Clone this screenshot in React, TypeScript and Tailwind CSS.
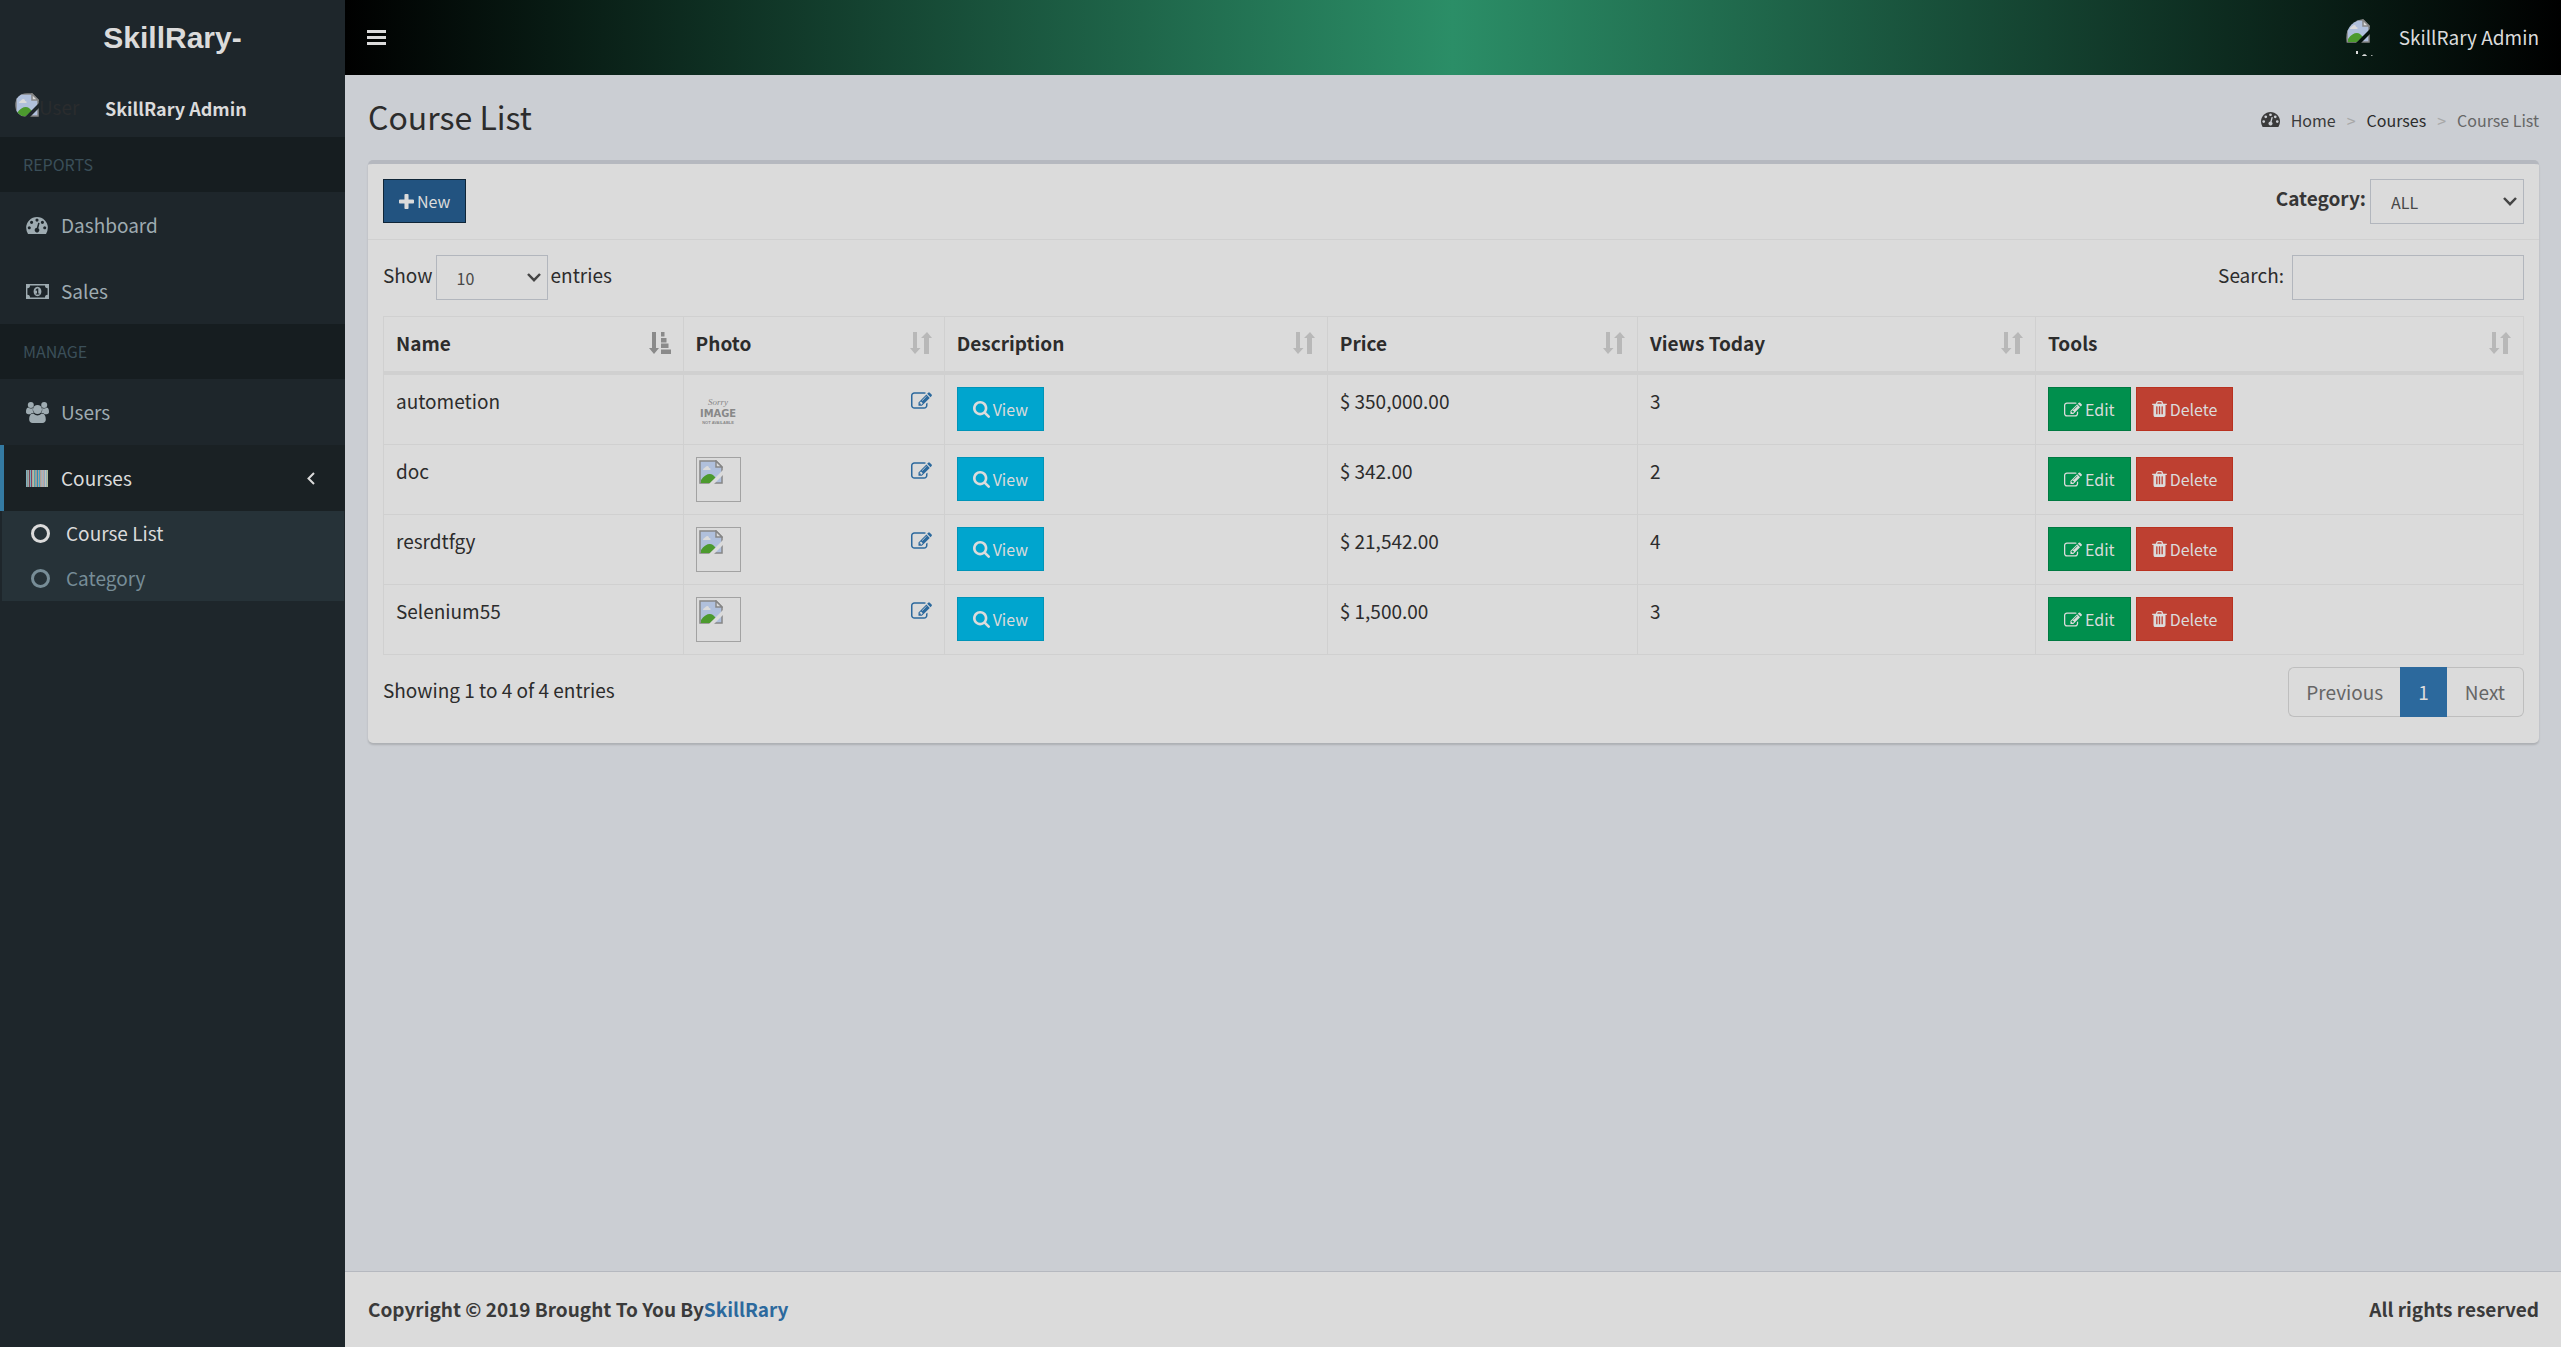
import type { ReactNode } from "react";

type IconProps = { className?: string };

function Glyph({ d, className, box = "0 0 1792 1792" }: IconProps & { d: string; box?: string }) {
  return (
    <svg viewBox={box} className={className} fill="currentColor" aria-hidden="true">
      <path d={d} />
    </svg>
  );
}

const GAUGE =
  "M384 1152q0-53-37.5-90.5t-90.5-37.5-90.5 37.5-37.5 90.5 37.5 90.5 90.5 37.5 90.5-37.5 37.5-90.5zm192-448q0-53-37.5-90.5t-90.5-37.5-90.5 37.5-37.5 90.5 37.5 90.5 90.5 37.5 90.5-37.5 37.5-90.5zm428 481l101-382q6-26-7.5-48.5t-38.5-29.5-48 6.5-30 39.5l-101 382q-60 5-107 43.5t-63 98.5q-20 77 20 146t117 89 146-20 89-117q16-60-6-117t-72-91zm660-33q0-53-37.5-90.5t-90.5-37.5-90.5 37.5-37.5 90.5 37.5 90.5 90.5 37.5 90.5-37.5 37.5-90.5zm-640-640q0-53-37.5-90.5t-90.5-37.5-90.5 37.5-37.5 90.5 37.5 90.5 90.5 37.5 90.5-37.5 37.5-90.5zm448 192q0-53-37.5-90.5t-90.5-37.5-90.5 37.5-37.5 90.5 37.5 90.5 90.5 37.5 90.5-37.5 37.5-90.5zm320 448q0 261-141 483-19 29-54 29h-1402q-35 0-54-29-141-221-141-483 0-182 71-348t191-286 286-191 348-71 348 71 286 191 191 286 71 348z";
const PENCIL_SQUARE =
  "M888 1184l116-116-152-152-116 116v56h96v96h56zm440-720q-16-16-33 1l-350 350q-17 17-1 33t33-1l350-350q17-17 1-33zm80 594v190q0 119-84.5 203.5t-203.5 84.5h-832q-119 0-203.5-84.5t-84.5-203.5v-832q0-119 84.5-203.5t203.5-84.5h832q63 0 117 25 15 7 18 23 3 17-9 29l-49 49q-14 14-32 8-23-6-45-6h-832q-66 0-113 47t-47 113v832q0 66 47 113t113 47h832q66 0 113-47t47-113v-126q0-13 9-22l64-64q15-15 35-7t20 29zm-96-738l288 288-672 672h-288v-288zm444 132l-92 92-288-288 92-92q28-28 68-28t68 28l152 152q28 28 28 68t-28 68z";
const MAGNIFIER =
  "M1216 832q0-185-131.5-316.5t-316.5-131.5-316.5 131.5-131.5 316.5 131.5 316.5 316.5 131.5 316.5-131.5 131.5-316.5zm512 832q0 52-38 90t-90 38q-54 0-90-38l-343-342q-179 124-399 124-143 0-273.5-55.5t-225-150-150-225-55.5-273.5 55.5-273.5 150-225 225-150 273.5-55.5 273.5 55.5 225 150 150 225 55.5 273.5q0 220-124 399l343 343q37 37 37 90z";
const TRASH =
  "M704 1376v-704q0-14-9-23t-23-9h-64q-14 0-23 9t-9 23v704q0 14 9 23t23 9h64q14 0 23-9t9-23zm256 0v-704q0-14-9-23t-23-9h-64q-14 0-23 9t-9 23v704q0 14 9 23t23 9h64q14 0 23-9t9-23zm256 0v-704q0-14-9-23t-23-9h-64q-14 0-23 9t-9 23v704q0 14 9 23t23 9h64q14 0 23-9t9-23zm-544-992h448l-48-117q-7-9-17-11h-317q-10 2-17 11zm928 32v64q0 14-9 23t-23 9h-96v948q0 83-47 143.5t-113 60.5h-832q-66 0-113-58.5t-47-141.5v-952h-96q-14 0-23-9t-9-23v-64q0-14 9-23t23-9h309l70-167q15-37 54-63t79-26h320q40 0 79 26t54 63l70 167h309q14 0 23 9t9 23z";
const PLUS =
  "M1600 736v192q0 40-28 68t-68 28h-416v416q0 40-28 68t-68 28h-192q-40 0-68-28t-28-68v-416h-416q-40 0-68-28t-28-68v-192q0-40 28-68t68-28h416v-416q0-40 28-68t68-28h192q40 0 68 28t28 68v416h416q40 0 68 28t28 68z";

function GaugeIcon({ className }: IconProps) {
  return <Glyph d={GAUGE} box="0 256 1792 1408" className={className} />;
}

function MoneyIcon() {
  return (
    <svg viewBox="0 0 23 15" className="h-[15px] w-[23px]" fill="currentColor" aria-hidden="true">
      <path
        fillRule="evenodd"
        d="M0 0H23V15H0ZM4 1.5A2.6 2.6 0 0 1 1.4 4.2V10.8A2.6 2.6 0 0 1 4 13.5H19A2.6 2.6 0 0 1 21.6 10.8V4.2A2.6 2.6 0 0 1 19 1.5Z"
      />
      <path
        fillRule="evenodd"
        d="M11.5 2.8C14 2.8 15.4 5 15.4 7.5S14 12.2 11.5 12.2 7.6 10 7.6 7.5 9 2.8 11.5 2.8ZM11 4.6L9.4 6.1 10.1 6.9 11 6.2V9.4H9.8V10.5H13.4V9.4H12.3V4.6Z"
      />
    </svg>
  );
}

function UsersIcon() {
  return (
    <svg viewBox="0 0 23 21" className="h-[21px] w-[23px]" fill="currentColor" aria-hidden="true">
      <circle cx="4.8" cy="3" r="3" />
      <circle cx="18.2" cy="3" r="3" />
      <path d="M2.2 5.6C4 6.9 5.7 6.6 7 5.9 6.5 8 6.8 9.5 7.9 11 6 11 5 11.6 4.4 12.2H2.4C.9 12.2 0 11.4 0 10 0 8 .5 5.6 2.2 5.6Z" />
      <path d="M20.8 5.6C19 6.9 17.3 6.6 16 5.9 16.5 8 16.2 9.5 15.1 11 17 11 18 11.6 18.6 12.2H20.6C22.1 12.2 23 11.4 23 10 23 8 22.5 5.6 20.8 5.6Z" />
      <circle cx="11.5" cy="7.5" r="4.5" />
      <path d="M7.3 11.5C10 14.1 13 14.1 15.7 11.5 18.8 11.5 19.8 14.5 19.8 17.5 19.8 19.8 18.4 21 16.5 21H6.5C4.6 21 3.2 19.8 3.2 17.5 3.2 14.5 4.2 11.5 7.3 11.5Z" />
    </svg>
  );
}

const STRIPES = [
  "#7fb0c0", "#8d9a92", "#9aa9ae", "#7a4552", "#6fb3c0", "#8a3f62", "#9db0a4", "#b6b9a0",
  "#4f9fb5", "#a59a8a", "#8fa0a8", "#2f8cb0", "#b0a390", "#4aa0c4", "#a8a496", "#b9a9ae",
  "#9fb8bd", "#c0a7a0", "#8fa8c0", "#c4c4bc", "#8fb4b8", "#b8bc98",
];

function BarcodeIcon() {
  return (
    <svg viewBox="0 0 22 17" className="h-[17px] w-[22px]" shapeRendering="crispEdges" aria-hidden="true">
      {STRIPES.map((fill, i) => (
        <rect key={i} x={i} y="0" width="1" height="17" fill={fill} />
      ))}
    </svg>
  );
}

function RingIcon() {
  return (
    <svg viewBox="0 0 19 19" className="h-[19px] w-[19px]" fill="none" stroke="currentColor" strokeWidth="3" aria-hidden="true">
      <circle cx="9.5" cy="9.5" r="8" />
    </svg>
  );
}

function SortIcon({ active = false }: { active?: boolean }) {
  return active ? (
    <svg viewBox="0 0 22 22" className="h-[22px] w-[22px] text-[#8a8a8a]" fill="currentColor" aria-hidden="true">
      <path d="M3 0H7V16H10L5 22 0 16H3Z" />
      <path d="M12 0H15.5V4.5H12ZM12 6H17.5V10.500H12ZM12 11.500H19.500V16H12ZM12 17.500H22V22H12Z" />
    </svg>
  ) : (
    <svg viewBox="0 0 22 22" className="h-[22px] w-[22px] text-[#b8b8b8]" fill="currentColor" aria-hidden="true">
      <path d="M3 0H7V16H10.5L5 22 0 16H3Z" />
      <path d="M17 0L22 6H19V22H14V6H11Z" />
    </svg>
  );
}

function BrokenPicture({ className }: IconProps) {
  return (
    <svg viewBox="0 0 24 24" className={className} aria-hidden="true">
      <path d="M1 1H17L23 7V23H1Z" fill="#b0c0dc" stroke="#868686" strokeWidth="1.5" />
      <path d="M4 10C4 8 6 8 6.5 7 8 5 10 6 10 8 12 8 12 10 11 10Z" fill="#dbdbdb" />
      <path d="M2 23V20C6 14 11 13 14 15L17 18 11 23Z" fill="#4c9a2e" />
      <path d="M17 1V7H23Z" fill="#dbdbdb" stroke="#868686" strokeWidth="1.5" />
      <path d="M24 10V15L15 24H10Z" className="fill-(--gap)" />
    </svg>
  );
}

function Chevron() {
  return (
    <svg
      viewBox="0 0 14 9"
      className="pointer-events-none absolute top-[18px] right-[7px] h-[9px] w-[14px]"
      fill="none"
      stroke="#454545"
      strokeWidth="2.5"
      aria-hidden="true"
    >
      <path d="M1 1L7 7.2 13 1" />
    </svg>
  );
}

function MenuHeading({ children }: { children: ReactNode }) {
  return <h2 className="h-[55px] bg-[#161d20] px-[23px] pt-[15px] text-base leading-6 text-[#3b4f59]">{children}</h2>;
}

function MenuLink({ icon, children }: { icon: ReactNode; children: ReactNode }) {
  return (
    <a href="#" className="flex h-[66px] items-center border-l-4 border-transparent pl-[22px] text-[19px] text-[#9eabb1]">
      <span className="w-[35px]">{icon}</span>
      {children}
    </a>
  );
}

function Sidebar() {
  return (
    <aside className="w-[345px] shrink-0 bg-[#1e262b]">
      <a
        href="#"
        className="flex h-[75px] items-center justify-center font-['Liberation_Sans',sans-serif] text-[30px] font-bold text-[#dbdbdb]"
      >
        SkillRary-
      </a>
      <div className="flex h-[62px] items-start pl-[15px]">
        <div className="flex w-[90px] items-start pt-[18px] text-[19px] leading-7 text-[#2a2c2e]">
          <span className="overflow-hidden rounded-tl-full rounded-bl-full [--gap:#1e262b]">
            <BrokenPicture className="h-6 w-6" />
          </span>
          User
        </div>
        <p className="pt-[19px] text-[18px] leading-7 font-bold text-[#dbdbdb]">SkillRary Admin</p>
      </div>
      <nav aria-label="Main">
        <MenuHeading>REPORTS</MenuHeading>
        <MenuLink icon={<GaugeIcon className="h-[17px] w-[22px]" />}>Dashboard</MenuLink>
        <MenuLink icon={<MoneyIcon />}>Sales</MenuLink>
        <MenuHeading>MANAGE</MenuHeading>
        <MenuLink icon={<UsersIcon />}>Users</MenuLink>
        <a
          href="#"
          className="flex h-[66px] items-center border-l-4 border-[#347aa2] bg-[#1a2124] pr-[30px] pl-[22px] text-[19px] text-[#dbdbdb]"
        >
          <span className="w-[35px]">
            <BarcodeIcon />
          </span>
          <span className="flex-1">Courses</span>
          <svg viewBox="0 0 8 13" className="h-[13px] w-2" fill="none" stroke="currentColor" strokeWidth="2" aria-hidden="true">
            <path d="M7 1L1.5 6.5 7 12" />
          </svg>
        </a>
        <div className="mr-px ml-0.5 bg-[#263238] text-[19px]">
          <a href="#" className="flex h-[45px] items-center gap-4 pl-[29px] text-[#dbdbdb]">
            <RingIcon />
            Course List
          </a>
          <a href="#" className="flex h-[45px] items-center gap-4 pl-[29px] text-[#778d97]">
            <RingIcon />
            Category
          </a>
        </div>
      </nav>
    </aside>
  );
}

function TopBar() {
  return (
    <header className="flex h-[75px] items-center justify-between bg-linear-to-r/srgb from-black via-[#2b8e67] to-black px-[22px] text-[#dbdbdb]">
      <button type="button" aria-label="Toggle navigation">
        <svg viewBox="0 0 19 15" className="h-[15px] w-[19px]" fill="currentColor" aria-hidden="true">
          <path d="M0 0H19V3H0ZM0 6H19V9H0ZM0 12H19V15H0Z" />
        </svg>
      </button>
      <a href="#" className="flex items-center gap-[15px] text-[19px]">
        <span className="h-[38px] w-[38px] overflow-hidden rounded-full [--gap:#06130e]">
          <BrokenPicture className="h-6 w-6" />
          <svg viewBox="0 0 38 14" className="h-[14px] w-[38px]" fill="#dbdbdb" aria-hidden="true">
            <path d="M10 8H12V11H10ZM16 13C17 10.5 20 10.500 21 13ZM25 12H28V13H25Z" />
          </svg>
        </span>
        SkillRary Admin
      </a>
    </header>
  );
}

const COLUMNS = [
  { label: "Name", width: "w-[14%]" },
  { label: "Photo", width: "w-[12.2%]" },
  { label: "Description", width: "w-[17.9%]" },
  { label: "Price", width: "w-[14.5%]" },
  { label: "Views Today", width: "w-[18.6%]" },
  { label: "Tools", width: "" },
];

const COURSES = [
  { name: "autometion", placeholder: true, price: "$ 350,000.00", views: 3 },
  { name: "doc", placeholder: false, price: "$ 342.00", views: 2 },
  { name: "resrdtfgy", placeholder: false, price: "$ 21,542.00", views: 4 },
  { name: "Selenium55", placeholder: false, price: "$ 1,500.00", views: 3 },
];

function Photo({ placeholder }: { placeholder: boolean }) {
  return placeholder ? (
    <span className="flex h-[45px] w-[45px] flex-col items-center justify-center pt-1 text-[#888]">
      <span className="font-['Liberation_Serif',serif] text-[9px] leading-[9px] italic">Sorry</span>
      <span className="font-['Liberation_Sans_Narrow','DejaVu_Sans_Condensed',sans-serif] text-[11px] leading-[13px] font-bold">IMAGE</span>
      <span className="font-['Liberation_Sans',sans-serif] text-[4px] leading-[5px] font-bold whitespace-nowrap">NOT AVAILABLE</span>
    </span>
  ) : (
    <span className="block h-[45px] w-[45px] border border-[#a2a2a2] p-0.5 [--gap:#dbdbdb]">
      <BrokenPicture className="h-6 w-6" />
    </span>
  );
}

function ActionButton({ d, box, iconClass, tone, children }: { d: string; box: string; iconClass: string; tone: string; children: ReactNode }) {
  return (
    <button type="button" className={`flex h-11 items-center gap-[3px] border px-[15px] text-base text-[#dbdbdb] ${tone}`}>
      <Glyph d={d} box={box} className={iconClass} />
      {children}
    </button>
  );
}

const cell = "border border-[#d0d0d0] px-3 py-3 align-top";

function CourseTable() {
  return (
    <table className="mt-4 w-full table-fixed border-collapse text-left text-[19px] leading-7 text-[#2c2c2c]">
      <thead>
        <tr>
          {COLUMNS.map((column, i) => (
            <th key={column.label} className={`${column.width} border border-b-[4px] border-[#d0d0d0] px-3 pt-3 pb-3.5`}>
              <span className="flex items-center justify-between">
                {column.label}
                <SortIcon active={i === 0} />
              </span>
            </th>
          ))}
        </tr>
      </thead>
      <tbody>
        {COURSES.map((course) => (
          <tr key={course.name}>
            <td className={cell}>{course.name}</td>
            <td className={cell}>
              <div className="flex justify-between">
                <Photo placeholder={course.placeholder} />
                <a href="#" aria-label="Edit photo" className="pt-[5px] text-[#2c699d]">
                  <Glyph d={PENCIL_SQUARE} box="0 128 1792 1408" className="h-[17px] w-[21px]" />
                </a>
              </div>
            </td>
            <td className={cell}>
              <ActionButton d={MAGNIFIER} box="64 128 1664 1664" iconClass="h-[17px] w-[17px]" tone="bg-[#00a5ce] border-[#0094b8]">
                View
              </ActionButton>
            </td>
            <td className={cell}>{course.price}</td>
            <td className={cell}>{course.views}</td>
            <td className={cell}>
              <div className="flex gap-[5px]">
                <ActionButton d={PENCIL_SQUARE} box="0 128 1792 1408" iconClass="h-[15px] w-[18px]" tone="bg-[#008f4d] border-[#007941]">
                  Edit
                </ActionButton>
                <ActionButton d={TRASH} box="192 128 1408 1536" iconClass="h-4 w-[15px]" tone="bg-[#be4031] border-[#b93120]">
                  Delete
                </ActionButton>
              </div>
            </td>
          </tr>
        ))}
      </tbody>
    </table>
  );
}

export default function App() {
  return (
    <div className="flex min-h-screen bg-[#cbced3] font-['Noto_Sans_CJK_SC','Noto_Sans',sans-serif]">
      <Sidebar />
      <div className="flex min-w-0 flex-1 flex-col">
        <TopBar />
        <main className="flex-1 pr-[22px] pl-[23px]">
          <div className="flex h-[85px] items-center justify-between pb-1">
            <h1 className="text-[32px] text-[#2c2c2c]">Course List</h1>
            <nav aria-label="Breadcrumb" className="flex items-center pt-2 text-base text-[#3a3a3a]">
              <GaugeIcon className="mr-[11px] h-[15px] w-[19px]" />
              <a href="#">Home</a>
              <span className="px-[11px] text-[#a8a8a8]">&gt;</span>
              <a href="#" className="text-[#2c2c2c]">Courses</a>
              <span className="px-[11px] text-[#a8a8a8]">&gt;</span>
              <span className="text-[#666]">Course List</span>
            </nav>
          </div>

          <section className="rounded-[5px] border-t-4 border-[#b5b8bf] bg-[#dbdbdb] shadow-[0_2px_2px_rgba(0,0,0,0.15)]">
            <div className="flex items-start justify-between border-b border-[#d0d0d0] p-[15px]">
              <ActionButton d={PLUS} box="192 128 1408 1408" iconClass="h-[15px] w-[15px]" tone="bg-[#225380] border-[#0f2537]">
                New
              </ActionButton>
              <div className="flex items-start gap-1">
                <label htmlFor="category" className="pt-[5px] text-[19px] leading-7 font-bold text-[#363636]">
                  Category:
                </label>
                <span className="relative">
                  <select
                    id="category"
                    className="block h-[45px] w-[154px] appearance-none border border-[#b2b6bd] bg-transparent pl-5 text-base text-[#484848]"
                  >
                    <option>ALL</option>
                  </select>
                  <Chevron />
                </span>
              </div>
            </div>

            <div className="p-[15px]">
              <div className="flex items-start justify-between text-[19px] leading-[30px] text-[#2c2c2c]">
                <div className="flex items-start gap-[3px]">
                  <label htmlFor="entries" className="pt-[5px]">Show</label>
                  <span className="relative">
                    <select
                      id="entries"
                      className="block h-[45px] w-28 appearance-none border border-[#b2b6bd] bg-transparent pl-5 text-base text-[#484848]"
                    >
                      <option>10</option>
                    </select>
                    <Chevron />
                  </span>
                  <span className="pt-[5px]">entries</span>
                </div>
                <div className="flex items-start gap-2">
                  <label htmlFor="search" className="pt-[5px]">Search:</label>
                  <input id="search" type="search" className="h-[45px] w-[232px] border border-[#b2b6bd] bg-transparent px-4" />
                </div>
              </div>

              <CourseTable />

              <div className="flex items-start justify-between pt-3 pb-[11px] text-[19px] leading-[30px]">
                <p className="pt-2 text-[#2c2c2c]">Showing 1 to 4 of 4 entries</p>
                <nav aria-label="Pages" className="flex h-[50px] text-[#666]">
                  <button type="button" className="rounded-l-md border border-r-0 border-[#bebebe] px-[17px]">Previous</button>
                  <button type="button" className="bg-[#2c699d] px-[18px] text-[#dbdbdb]">1</button>
                  <button type="button" className="rounded-r-md border border-l-0 border-[#bebebe] px-[18px]">Next</button>
                </nav>
              </div>
            </div>
          </section>
        </main>

        <footer className="flex h-[76px] items-center justify-between border-t border-[#b5b8bf] bg-[#dbdbdb] pr-[22px] pl-[23px] text-[19px] font-bold text-[#3a3a3a]">
          <p>
            Copyright © 2019 Brought To You By
            <a href="#" className="text-[#2c699d]">SkillRary</a>
          </p>
          <p>All rights reserved</p>
        </footer>
      </div>
    </div>
  );
}
